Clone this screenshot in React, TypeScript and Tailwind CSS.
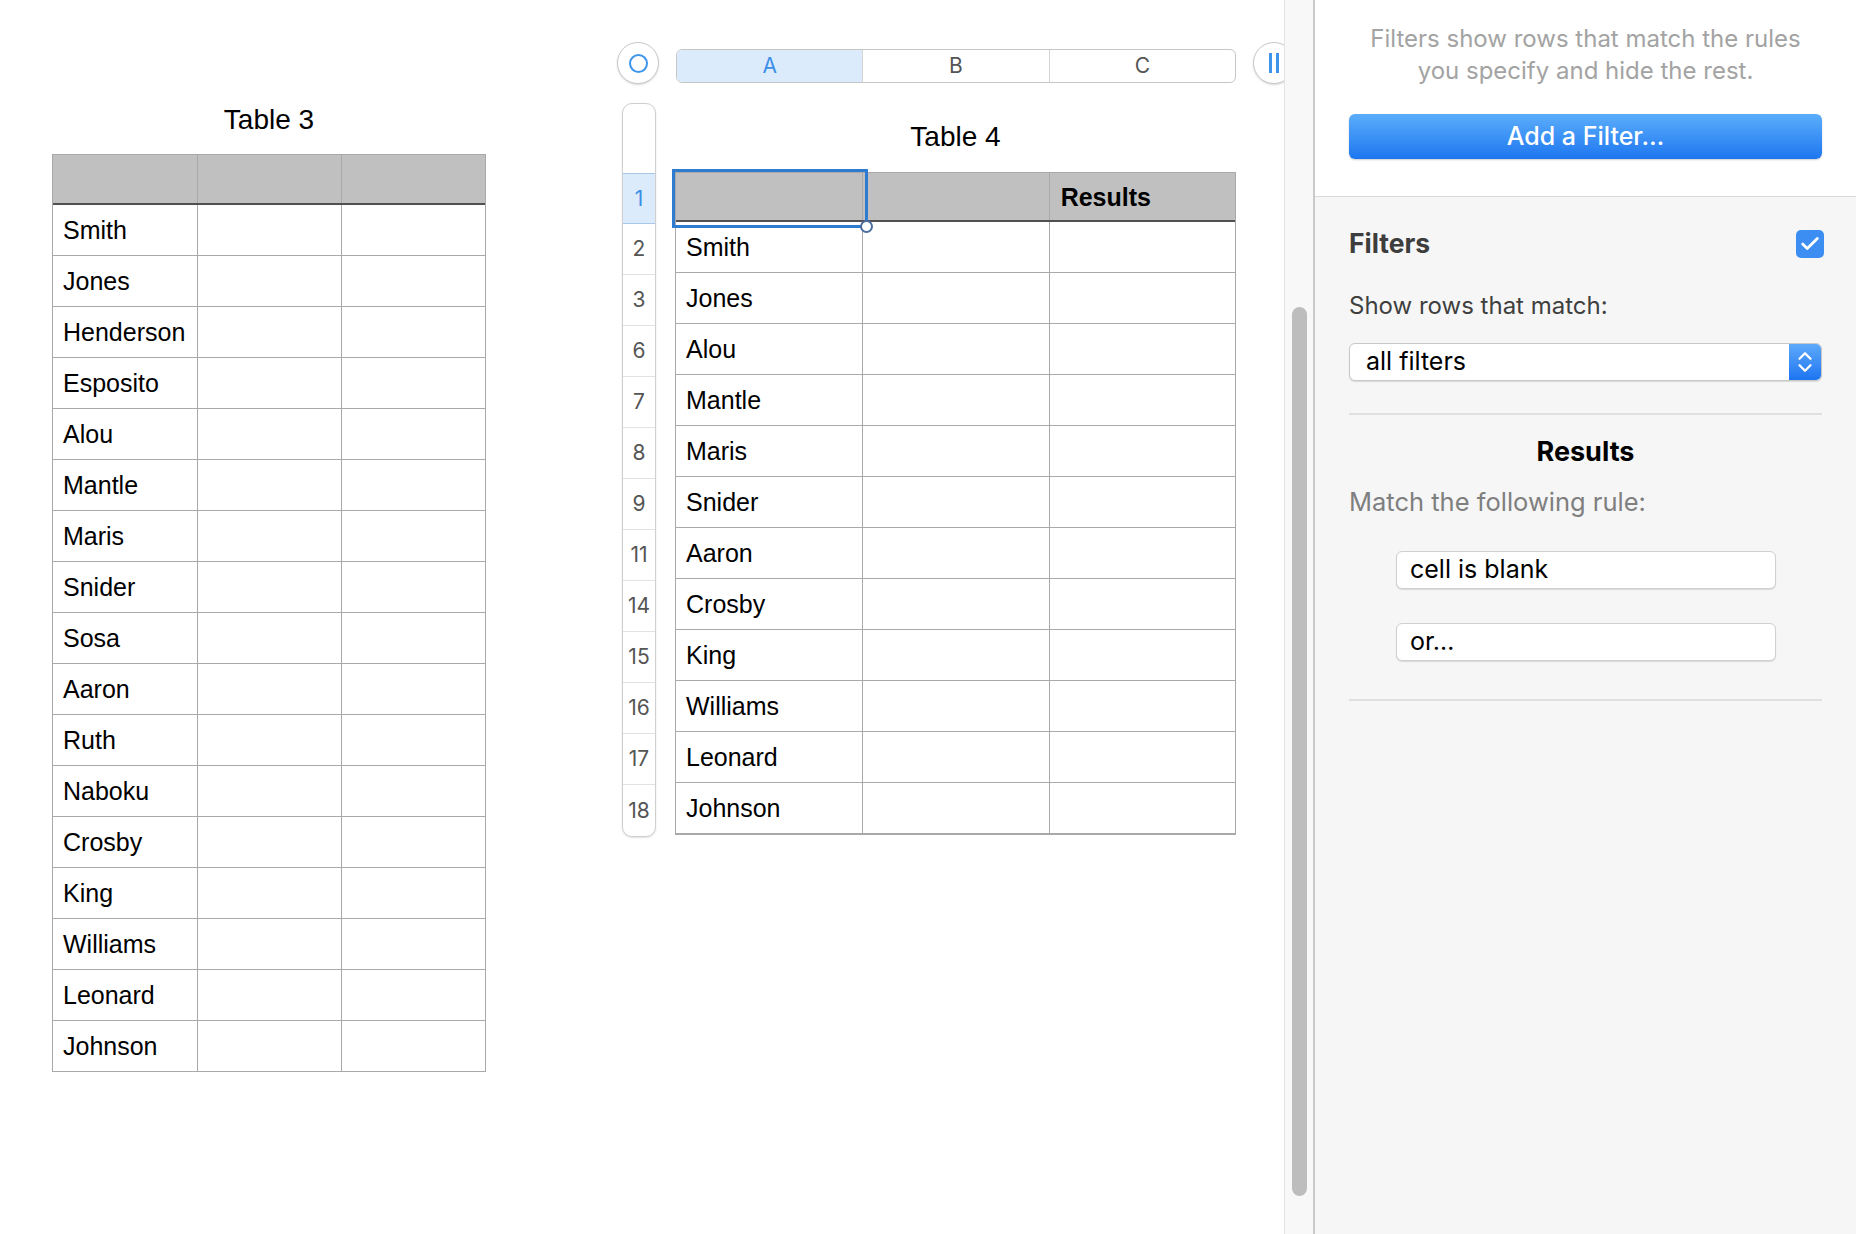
import { Check, ChevronDown, ChevronUp } from "lucide-react";

const table3Names = [
  "Smith",
  "Jones",
  "Henderson",
  "Esposito",
  "Alou",
  "Mantle",
  "Maris",
  "Snider",
  "Sosa",
  "Aaron",
  "Ruth",
  "Naboku",
  "Crosby",
  "King",
  "Williams",
  "Leonard",
  "Johnson",
];

const table4Rows: [number, string][] = [
  [2, "Smith"],
  [3, "Jones"],
  [6, "Alou"],
  [7, "Mantle"],
  [8, "Maris"],
  [9, "Snider"],
  [11, "Aaron"],
  [14, "Crosby"],
  [15, "King"],
  [16, "Williams"],
  [17, "Leonard"],
  [18, "Johnson"],
];

const cellText = "font-['Liberation_Sans',Arial,sans-serif] text-[25px] text-black";
const uiFont = "font-['Inter','Noto_Sans',sans-serif]";

function Table3() {
  return (
    <div className="mt-[103px] flex w-[434px] shrink-0 flex-col">
      <h2 className={`${cellText} h-[34px] text-center text-[28px] leading-[34px]`}>Table 3</h2>
      <div className="mt-[17px] border border-[#a9a9a9]">
        <div className="grid h-[50px] grid-cols-3 border-b-2 border-[#505050] bg-[#bfc0bf]">
          <div />
          <div className="border-l border-[#a9a9a9]" />
          <div className="border-l border-[#a9a9a9]" />
        </div>
        {table3Names.map((name) => (
          <div key={name} className="grid h-[51px] grid-cols-3 border-b border-[#a9a9a9] last:h-[50px] last:border-b-0">
            <div className={`${cellText} flex items-center pl-[10px] pt-[2px]`}>{name}</div>
            <div className="border-l border-[#a9a9a9]" />
            <div className="border-l border-[#a9a9a9]" />
          </div>
        ))}
      </div>
    </div>
  );
}

function RoundButton({ children }: { children: React.ReactNode }) {
  return (
    <div className="flex h-[42px] w-[42px] shrink-0 items-center justify-center rounded-full border border-[#c9c9c9] bg-white shadow-[0_1px_2px_rgba(0,0,0,0.15)]">
      {children}
    </div>
  );
}

function Table4() {
  return (
    <div className="ml-[131px] mt-[42px] flex shrink-0 flex-col">
      <div className="flex items-center">
        <RoundButton>
          <div className="h-[19px] w-[19px] rounded-full border-2 border-[#3d95ec]" />
        </RoundButton>
        <div className={`${uiFont} ml-[17px] mt-[5px] flex h-[34px] w-[560px] overflow-hidden rounded-[6px] border border-[#c6c6c6] text-[21px]`}>
          <div className="flex flex-1 items-center justify-center bg-[#dcebfc] text-[#3d8fe6]">A</div>
          <div className="flex flex-1 items-center justify-center border-l border-[#d4d4d4] text-[#555]">B</div>
          <div className="flex flex-1 items-center justify-center border-l border-[#d4d4d4] text-[#555]">C</div>
        </div>
        <div className="ml-[17px]">
          <RoundButton>
            <div className="flex gap-[4px]">
              <span className="h-[20px] w-[3px] bg-[#3d95ec]" />
              <span className="h-[20px] w-[3px] bg-[#3d95ec]" />
            </div>
          </RoundButton>
        </div>
      </div>

      <div className="mt-[19px] flex">
        <div className="ml-[5px] flex w-[34px] flex-col overflow-hidden rounded-[10px] border border-[#cfcfcf] bg-white shadow-[0_1px_2px_rgba(0,0,0,0.12)]">
          <div className="h-[69px]" />
          <div className={`${uiFont} flex h-[51px] items-center justify-center border-y border-[#a9c7e8] bg-[#dcebfc] text-[21px] text-[#3d8fe6]`}>1</div>
          {table4Rows.map(([n]) => (
            <div key={n} className={`${uiFont} flex h-[51px] items-center justify-center border-b border-[#e2e2e2] text-[21px] text-[#555] last:border-b-0`}>
              {n}
            </div>
          ))}
        </div>

        <div className="ml-[19px] flex w-[561px] flex-col">
          <h2 className={`${cellText} mt-[17px] h-[34px] text-center text-[28px] leading-[34px]`}>Table 4</h2>
          <div className="relative mt-[18px] border border-[#a9a9a9]">
            <div className="grid h-[49px] grid-cols-3 border-b-2 border-[#505050] bg-[#bfc0bf]">
              <div />
              <div className="border-l border-[#a9a9a9]" />
              <div className={`${cellText} flex items-center border-l border-[#a9a9a9] pl-[11px] pt-[2px] font-bold`}>Results</div>
            </div>
            {table4Rows.map(([n, name]) => (
              <div key={n} className="grid h-[51px] grid-cols-3 border-b border-[#a9a9a9] last:h-[50px] last:border-b-0">
                <div className={`${cellText} flex items-center pl-[10px] pt-[2px]`}>{name}</div>
                <div className="border-l border-[#a9a9a9]" />
                <div className="border-l border-[#a9a9a9]" />
              </div>
            ))}
            <div className="absolute -left-[4px] -top-[4px] h-[59px] w-[196px] border-[3px] border-[#2f7bd0]" />
            <div className="absolute left-[184px] top-[47px] h-[13px] w-[13px] rounded-full border-2 border-[#4a6da0] bg-white" />
          </div>
        </div>
      </div>
    </div>
  );
}

function Sidebar() {
  return (
    <div className={`${uiFont} flex w-[541px] shrink-0 flex-col bg-[#f6f6f6]`}>
      <div className="flex flex-col border-b border-[#dadada] bg-white px-[34px] pb-[37px] pt-[23px]">
        <p className="text-center text-[24px] leading-[32px] text-[#a3a3a3]">
          Filters show rows that match the rules
          <br />
          you specify and hide the rest.
        </p>
        <button className="mt-[27px] flex h-[45px] items-center justify-center rounded-[6px] bg-linear-to-b from-[#5badfa] to-[#1c76f0] text-[25px] font-medium text-white shadow-[0_1px_2px_rgba(0,0,0,0.2)]">
          Add a Filter…
        </button>
      </div>

      <div className="flex flex-col px-[34px] pt-[31px]">
        <div className="flex h-[32px] items-center justify-between">
          <span className="text-[26.5px] font-bold text-[#3d3d3d]">Filters</span>
          <span className="mr-[-2px] flex h-[28px] w-[28px] items-center justify-center rounded-[5px] bg-[#3c8ef3]">
            <Check size={22} strokeWidth={3} className="text-white" />
          </span>
        </div>

        <p className="mt-[30px] text-[24px] leading-[32px] text-[#3f3f3f]">Show rows that match:</p>

        <div className="mt-[21px] flex h-[38px] overflow-hidden rounded-[6px] border border-[#c8c8c8] bg-white shadow-[0_1px_1px_rgba(0,0,0,0.12)]">
          <span className="flex flex-1 items-center pl-[16px] text-[25px] text-black">all filters</span>
          <span className="flex w-[32px] flex-col items-center justify-center bg-linear-to-b from-[#5ea9fa] to-[#1b74f0] text-white">
            <ChevronUp size={22} strokeWidth={2.5} className="-mb-[5px]" />
            <ChevronDown size={22} strokeWidth={2.5} className="-mt-[5px]" />
          </span>
        </div>

        <div className="mt-[32px] h-[2px] bg-[#e0e0e0]" />

        <p className="mt-[21px] text-center text-[27px] font-bold leading-[32px] text-black">Results</p>
        <p className="mt-[18px] text-[25.5px] leading-[32px] text-[#7f7f7f]">Match the following rule:</p>

        <div className="ml-[47px] mt-[33px] flex h-[38px] w-[380px] items-center rounded-[6px] border border-[#d0d0d0] bg-white pl-[13px] text-[25px] text-black shadow-[0_1px_1px_rgba(0,0,0,0.12)]">
          cell is blank
        </div>
        <div className="ml-[47px] mt-[34px] flex h-[38px] w-[380px] items-center rounded-[6px] border border-[#d0d0d0] bg-white pl-[13px] text-[25px] text-black shadow-[0_1px_1px_rgba(0,0,0,0.12)]">
          or…
        </div>

        <div className="mt-[38px] h-[2px] bg-[#e0e0e0]" />
      </div>
    </div>
  );
}

export default function App() {
  return (
    <div className="flex h-[1234px] w-[1856px] overflow-hidden bg-white">
      <div className="flex h-full w-[1284px] shrink-0 items-start overflow-hidden bg-white pl-[52px]">
        <Table3 />
        <Table4 />
      </div>
      <div className="flex h-full w-[31px] shrink-0 border-l border-r-2 border-l-[#e2e2e2] border-r-[#cacaca] bg-[#f8f8f8] pl-[7px] pt-[307px]">
        <div className="h-[889px] w-[15px] rounded-full bg-[#bdbdbd]" />
      </div>
      <Sidebar />
    </div>
  );
}
